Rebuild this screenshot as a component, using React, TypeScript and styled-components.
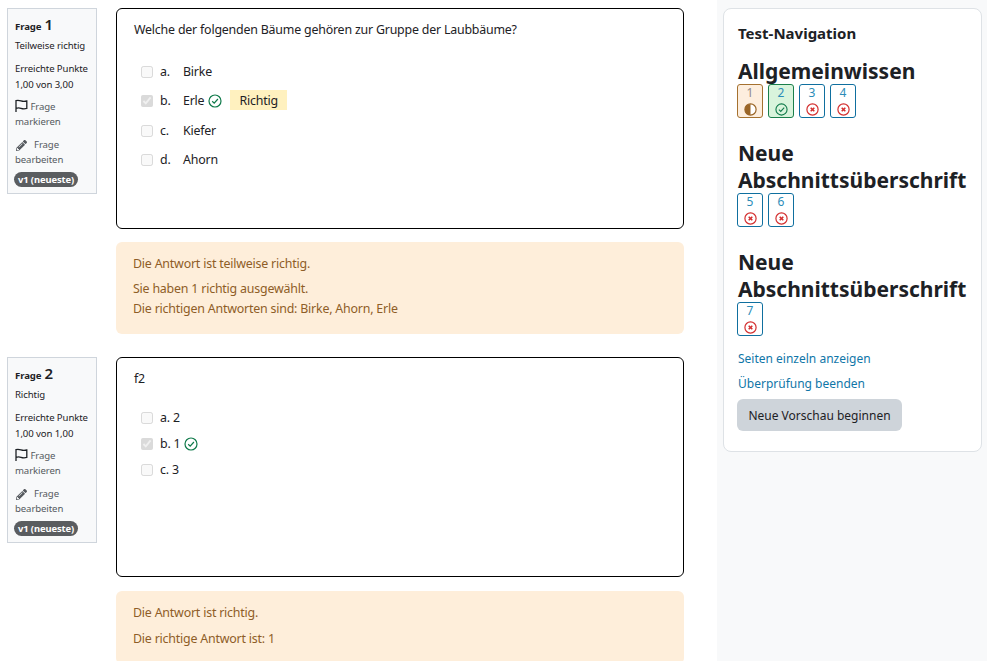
import React, { FC } from "react";
import styled, { createGlobalStyle } from "styled-components";
import { FaPencilAlt } from "react-icons/fa";

const GlobalStyle = createGlobalStyle`
  html, body {
    margin: 0;
    height: 661px;
    overflow: hidden;
    background: #fff;
    font-family: "Noto Sans", "Liberation Sans", sans-serif;
    color: #1d2125;
  }
`;

const Page = styled.div`
  display: flex;
  height: 661px;
  overflow: hidden;
`;

const Main = styled.main`
  width: 717px;
  flex-shrink: 0;
  padding: 8px 33px 0 7px;
  box-sizing: border-box;
`;

const Question = styled.section`
  display: flex;
  align-items: flex-start;
  gap: 19px;
  margin-bottom: 23px;
`;

const InfoBox = styled.div`
  width: 90px;
  height: 186px;
  flex-shrink: 0;
  box-sizing: border-box;
  background: #f8f9fa;
  border: 1px solid #cfd5dc;
  padding: 5px 7px 0;
  font-size: 9.6px;
  letter-spacing: -0.1px;
`;

const QuestionNo = styled.h3`
  margin: 0;
  font-size: 9.6px;
  line-height: 20px;
  font-weight: 700;
  span {
    font-size: 15px;
    font-weight: 600;
    margin-left: 3px;
  }
`;

const InfoLine = styled.div<{ $gap?: number }>`
  line-height: 16px;
  margin-top: ${(p) => p.$gap ?? 0}px;
`;

const InfoAction = styled.div`
  margin-top: 6px;
  line-height: 15px;
  color: #55595e;
  svg {
    vertical-align: -3px;
  }
  & + & {
    margin-top: 7px;
  }
`;

const PencilWrap = styled.span`
  color: #55595e;
  margin: 0 7px 0 1px;
  font-size: 11px;
`;

const Version = styled.span`
  display: inline-block;
  margin: 5px 0 0 -1px;
  background: #5a5d60;
  color: #fff;
  font-weight: 700;
  font-size: 9.4px;
  line-height: 15px;
  border-radius: 8px;
  padding: 0 4px;
  white-space: nowrap;
`;

const Body = styled.div`
  flex: 1;
  min-width: 0;
`;

const ContentBox = styled.div<{ $height: number }>`
  height: ${(p) => p.$height}px;
  box-sizing: border-box;
  border: 1px solid #000;
  border-radius: 6px;
  padding: 10px 17px;
  font-size: 12.4px;
  letter-spacing: -0.2px;
`;

const Prompt = styled.p`
  margin: 0;
  line-height: 21px;
`;

const Answers = styled.div<{ $rowGap: number; $top: number }>`
  margin: ${(p) => p.$top}px 0 0 7px;
  display: flex;
  flex-direction: column;
  gap: ${(p) => p.$rowGap}px;
`;

const AnswerRow = styled.label`
  display: flex;
  align-items: center;
  height: 20px;
  line-height: 20px;
  svg {
    margin-left: 1px;
  }
`;

const Check = styled.input`
  width: 12px;
  height: 12px;
  margin: 0 7px 0 0;
  flex-shrink: 0;
  opacity: 0.8;
`;

const Letter = styled.span`
  width: 23px;
`;

const CorrectTag = styled.span`
  background: #fff1bf;
  margin: 0 0 2px 8px;
  padding: 1px 9px 0;
  line-height: 19px;
`;

const Feedback = styled.div<{ $gap: number }>`
  margin-top: 13.5px;
  background: #feeeda;
  color: #8e5d27;
  border-radius: 6px;
  padding: 12px 17px 15px;
  font-size: 12.4px;
  letter-spacing: -0.2px;
  line-height: 20px;
  p {
    margin: 0 0 ${(p) => p.$gap}px;
  }
  p:last-child {
    margin: 0;
  }
`;

const Aside = styled.aside`
  flex: 1;
  background: #f8f9fa;
  padding: 8px 5px 0 6px;
`;

const NavCard = styled.div`
  height: 444px;
  box-sizing: border-box;
  background: #fff;
  border: 1px solid #dee2e6;
  border-radius: 8px;
  padding: 14px 12px 0 14px;
`;

const NavTitle = styled.h5`
  margin: 0 0 15px;
  font-size: 15px;
  line-height: 20px;
  font-weight: 700;
`;

const SectionHeading = styled.h3`
  margin: 0;
  font-size: 21px;
  line-height: 27px;
  font-weight: 700;
`;

const NavGrid = styled.div`
  display: flex;
  gap: 5px;
  margin: -1px 0 22px -1px;
  &:last-of-type {
    margin-bottom: 10px;
  }
`;

const NavButton = styled.a<{ $state: "partial" | "correct" | "wrong" }>`
  width: 26px;
  height: 34px;
  box-sizing: border-box;
  border-radius: 3px;
  border: 1px solid
    ${(p) => (p.$state === "partial" ? "#a5712f" : p.$state === "correct" ? "#1a7f4b" : "#0f6f9f")};
  background: ${(p) => (p.$state === "partial" ? "#fdeede" : p.$state === "correct" ? "#d9f4dc" : "#fff")};
  color: ${(p) => (p.$state === "partial" ? "#8f8a8a" : "#2b8cb8")};
  display: flex;
  flex-direction: column;
  align-items: center;
  font-size: 12px;
  line-height: 15px;
  svg {
    margin-top: 3px;
  }
`;

const NavLink = styled.a`
  display: block;
  color: #0f76a8;
  font-size: 12px;
  line-height: 25px;
`;

const PreviewButton = styled.button`
  display: block;
  margin: 3px 0 0 -1px;
  width: 165px;
  height: 32px;
  border: 0;
  border-radius: 6px;
  background: #ced4da;
  color: #1d2125;
  font: inherit;
  font-size: 12px;
`;

const CheckCircle: FC<{ size?: number }> = ({ size = 14 }) => (
  <svg width={size} height={size} viewBox="0 0 14 14" fill="none">
    <circle cx="7" cy="7" r="6" stroke="#0f7a4a" strokeWidth="1.2" />
    <path d="M4.2 7.2 6.2 9.1 9.9 5" stroke="#0f7a4a" strokeWidth="1.2" />
  </svg>
);

const CrossCircle: FC = () => (
  <svg width="13" height="13" viewBox="0 0 13 13" fill="none">
    <circle cx="6.5" cy="6.5" r="5.6" stroke="#d32f2f" strokeWidth="1.2" />
    <path d="M4.700 4.700 8.300 8.300M8.300 4.700 4.700 8.300" stroke="#d32f2f" strokeWidth="1.600" />
  </svg>
);

const HalfCircle: FC = () => (
  <svg width="13" height="13" viewBox="0 0 13 13" fill="none">
    <circle cx="6.5" cy="6.5" r="5.6" stroke="#9a6526" strokeWidth="1.2" fill="#fff" />
    <path d="M6.5.9a5.6 5.6 0 0 0 0 11.2z" fill="#9a6526" />
  </svg>
);

const FlagIcon: FC = () => (
  <svg width="13" height="14" viewBox="0 0 13 14" fill="none">
    <path d="M1 13V1.6C3 1 4.3 1.3 6 1.9s3.600.7 5.800.1v7.400c-2.200.6-4 .5-5.800-.1S3 8.700 1 9.300" stroke="#1d2125" strokeWidth="1.300" />
  </svg>
);

type QuestionInfoProps = { no: number; state: string; points: string };

const QuestionInfo: FC<QuestionInfoProps> = ({ no, state, points }) => (
  <InfoBox>
    <QuestionNo>
      Frage<span>{no}</span>
    </QuestionNo>
    <InfoLine $gap={1}>{state}</InfoLine>
    <InfoLine $gap={7}>Erreichte Punkte</InfoLine>
    <InfoLine>{points}</InfoLine>
    <InfoAction>
      <FlagIcon /> Frage markieren
    </InfoAction>
    <InfoAction>
      <PencilWrap>
        <FaPencilAlt />
      </PencilWrap>
      Frage bearbeiten
    </InfoAction>
    <Version>v1 (neueste)</Version>
  </InfoBox>
);

const App: FC = () => (
  <Page>
    <GlobalStyle />
    <Main>
      <Question>
        <QuestionInfo no={1} state="Teilweise richtig" points="1,00 von 3,00" />
        <Body>
          <ContentBox $height={220.5}>
            <Prompt>Welche der folgenden Bäume gehören zur Gruppe der Laubbäume?</Prompt>
            <Answers $rowGap={9.5} $top={21.5}>
              <AnswerRow>
                <Check type="checkbox" disabled />
                <Letter>a.</Letter>Birke
              </AnswerRow>
              <AnswerRow>
                <Check type="checkbox" disabled defaultChecked />
                <Letter>b.</Letter>Erle&nbsp;
                <CheckCircle />
                <CorrectTag>Richtig</CorrectTag>
              </AnswerRow>
              <AnswerRow>
                <Check type="checkbox" disabled />
                <Letter>c.</Letter>Kiefer
              </AnswerRow>
              <AnswerRow>
                <Check type="checkbox" disabled />
                <Letter>d.</Letter>Ahorn
              </AnswerRow>
            </Answers>
          </ContentBox>
          <Feedback $gap={5}>
            <p>Die Antwort ist teilweise richtig.</p>
            Sie haben 1 richtig ausgewählt.
            <br />
            Die richtigen Antworten sind: Birke, Ahorn, Erle
          </Feedback>
        </Body>
      </Question>
      <Question>
        <QuestionInfo no={2} state="Richtig" points="1,00 von 1,00" />
        <Body>
          <ContentBox $height={220}>
            <Prompt>f2</Prompt>
            <Answers $rowGap={6} $top={18.5}>
              <AnswerRow>
                <Check type="checkbox" disabled />
                a. 2
              </AnswerRow>
              <AnswerRow>
                <Check type="checkbox" disabled defaultChecked />
                b. 1&nbsp;
                <CheckCircle />
              </AnswerRow>
              <AnswerRow>
                <Check type="checkbox" disabled />
                c. 3
              </AnswerRow>
            </Answers>
          </ContentBox>
          <Feedback $gap={6}>
            <p>Die Antwort ist richtig.</p>
            <p>Die richtige Antwort ist: 1</p>
          </Feedback>
        </Body>
      </Question>
    </Main>
    <Aside>
      <NavCard>
        <NavTitle>Test-Navigation</NavTitle>
        <SectionHeading>Allgemeinwissen</SectionHeading>
        <NavGrid>
          <NavButton $state="partial">1<HalfCircle /></NavButton>
          <NavButton $state="correct">2<CheckCircle size={13} /></NavButton>
          <NavButton $state="wrong">3<CrossCircle /></NavButton>
          <NavButton $state="wrong">4<CrossCircle /></NavButton>
        </NavGrid>
        <SectionHeading>Neue Abschnittsüberschrift</SectionHeading>
        <NavGrid>
          <NavButton $state="wrong">5<CrossCircle /></NavButton>
          <NavButton $state="wrong">6<CrossCircle /></NavButton>
        </NavGrid>
        <SectionHeading>Neue Abschnittsüberschrift</SectionHeading>
        <NavGrid>
          <NavButton $state="wrong">7<CrossCircle /></NavButton>
        </NavGrid>
        <NavLink>Seiten einzeln anzeigen</NavLink>
        <NavLink>Überprüfung beenden</NavLink>
        <PreviewButton>Neue Vorschau beginnen</PreviewButton>
      </NavCard>
    </Aside>
  </Page>
);

export default App;
